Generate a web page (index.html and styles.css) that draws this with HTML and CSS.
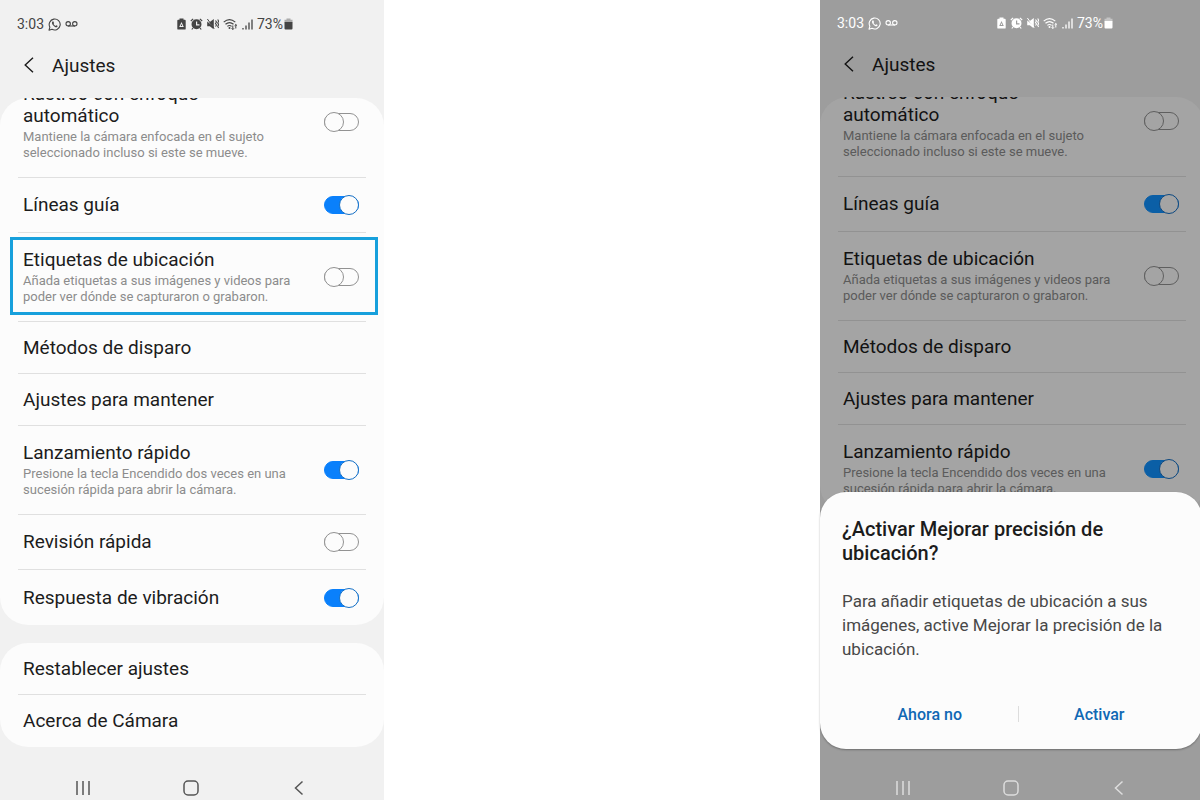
FILE: index.html
```html
<!DOCTYPE html>
<html lang="es">
<head>
  <meta charset="UTF-8" />
  <title>Ajustes</title>
  <link rel="stylesheet" href="styles.css">
</head>
<body>

  <!-- Icons shared by both screens -->
  <svg class="sprite" aria-hidden="true">
    <symbol id="chat" viewBox="0 0 13 13">
      <path d="M1 12.2l.9-3A5.5 5.5 0 1 1 4 11.3z" fill="none" stroke="currentColor" stroke-width="1.1" stroke-linejoin="round"/>
      <path d="M4.6 3.4c-1 .8-.8 2.2.5 3.8 1.4 1.7 3 2.6 4.1 1.7.4-.4.5-.9.2-1.1l-1.2-.6-.8.7c-.9-.4-1.5-1.1-1.9-1.9l.6-.8-.6-1.4c-.2-.5-.6-.6-.9-.4z" fill="currentColor"/>
    </symbol>
    <symbol id="voicemail" viewBox="0 0 13 8">
      <path d="M3 6h7" fill="none" stroke="currentColor" stroke-width="1.1"/>
      <circle cx="3.2" cy="3.8" r="2.2" fill="none" stroke="currentColor" stroke-width="1.1"/>
      <circle cx="9.8" cy="3.8" r="2.2" fill="none" stroke="currentColor" stroke-width="1.1"/>
    </symbol>
    <symbol id="saver" viewBox="0 0 9 12">
      <path fill-rule="evenodd" d="M2.5.5h4v1.3h1.300q.9 0 .9.9v8q0 .9-.9.9H1.200q-.9 0-.9-.9v-8q0-.9.9-.9h1.300zM4.500 4L2.200 8.900h4.600zM4.500 6l.8 1.900H3.700z" fill="currentColor"/>
    </symbol>
    <symbol id="alarm" viewBox="0 0 13 12">
      <path d="M.8 3L3.2.9M12.2 3L9.8.9M3 10l-1.2 1.5M10 10l1.2 1.5" stroke="currentColor" stroke-width="1.2" fill="none"/>
      <path fill-rule="evenodd" d="M6.5 1.2a5 5 0 1 0 0 10 5 5 0 0 0 0-10zM6 3.5h1.200v2.700h2.300v1.200H6z" fill="currentColor"/>
    </symbol>
    <symbol id="mute" viewBox="0 0 12 12">
      <path d="M.2 3.500L6.500 11V8.500zM2.500 4.200L6.800 9V1zM.2 3.500v4.800h2.600L6.600 11.200V9z" fill="currentColor"/>
      <path d="M.4 1l6.800 9.500" stroke="currentColor" stroke-width="1"/>
      <path d="M8.5 2.5l1 1.500-1 1.500 1 1.500-1 1.500M10.700 1.500l1 1.700-1 1.700 1 1.700-1 1.700 1 1.700" fill="none" stroke="currentColor" stroke-width="1.100"/>
    </symbol>
    <symbol id="wifi" viewBox="0 0 15 12">
      <path d="M.7 4.1q5.800-5 11.600 0M2.500 6.300q4-3.500 8 0M4.400 8.400q2.100-1.800 4.200 0" fill="none" stroke="currentColor" stroke-width="1.200"/>
      <circle cx="6.5" cy="10" r="1" fill="currentColor"/>
      <path d="M9.800 7.500v4M8.600 10.300l1.200 1.200 1.200-1.200M12.800 10.500v-4M11.600 7.700l1.200-1.200L14 7.700" fill="none" stroke="currentColor" stroke-width="1"/>
    </symbol>
    <symbol id="signal" viewBox="0 0 11 12">
      <path d="M1 10v1.500M4 7.500v4M7 4.500v7M10 1.500v10" stroke="currentColor" stroke-width="1.300"/>
    </symbol>
    <symbol id="battery" viewBox="0 0 9 12">
      <path d="M2.500.5h4v1.300h2v2.400h-8V1.800h2z" fill="currentColor" opacity=".4"/>
      <path d="M.5 4h8v6.500q0 1-1 1h-6q-1 0-1-1z" fill="currentColor"/>
    </symbol>
    <symbol id="chevron" viewBox="0 0 10 16">
      <path d="M9 .8L1.200 8 9 15.200" fill="none" stroke="currentColor" stroke-width="1.400"/>
    </symbol>
    <symbol id="recents" viewBox="0 0 16 16">
      <path d="M2 1v14M8 1v14M14 1v14" stroke="currentColor" stroke-width="1.500"/>
    </symbol>
    <symbol id="home" viewBox="0 0 16 16">
      <rect x="1" y="1" width="14" height="14" rx="4" fill="none" stroke="currentColor" stroke-width="1.500"/>
    </symbol>
    <symbol id="back" viewBox="0 0 16 16">
      <path d="M11.500 1.500L4.500 8l7 6.500" fill="none" stroke="currentColor" stroke-width="1.500"/>
    </symbol>
  </svg>

  <!-- Camera settings -->
  <main class="phone">
    <div class="status-bar">
      <div class="status-left">
        <span>3:03</span>
        <svg width="13" height="13"><use href="#chat"/></svg>
        <svg width="13" height="8"><use href="#voicemail"/></svg>
      </div>
      <div class="status-right">
        <svg width="9" height="12"><use href="#saver"/></svg>
        <svg width="13" height="12"><use href="#alarm"/></svg>
        <svg width="12" height="12"><use href="#mute"/></svg>
        <svg width="15" height="12"><use href="#wifi"/></svg>
        <svg width="11" height="12"><use href="#signal"/></svg>
        <span class="charge">73%<svg width="9" height="12"><use href="#battery"/></svg></span>
      </div>
    </div>
    <header class="title-bar">
      <button class="icon-button" aria-label="Atrás"><svg width="10" height="16"><use href="#chevron"/></svg></button>
      <h1>Ajustes</h1>
    </header>

    <div class="card scrolled">
      <label class="row detail">
        <span class="text"><span class="name">Rastreo con enfoque<br>automático</span><span class="hint">Mantiene la cámara enfocada en el sujeto seleccionado incluso si este se mueve.</span></span>
        <input class="switch" type="checkbox">
      </label>
      <label class="row toggle">
        <span class="name">Líneas guía</span>
        <input class="switch" type="checkbox" checked>
      </label>
      <label class="row detail highlight">
        <span class="text"><span class="name">Etiquetas de ubicación</span><span class="hint">Añada etiquetas a sus imágenes y videos para poder ver dónde se capturaron o grabaron.</span></span>
        <input class="switch" type="checkbox">
      </label>
      <a class="row" href="#"><span class="name">Métodos de disparo</span></a>
      <a class="row" href="#"><span class="name">Ajustes para mantener</span></a>
      <label class="row detail">
        <span class="text"><span class="name">Lanzamiento rápido</span><span class="hint">Presione la tecla Encendido dos veces en una sucesión rápida para abrir la cámara.</span></span>
        <input class="switch" type="checkbox" checked>
      </label>
      <label class="row toggle">
        <span class="name">Revisión rápida</span>
        <input class="switch" type="checkbox">
      </label>
      <label class="row toggle">
        <span class="name">Respuesta de vibración</span>
        <input class="switch" type="checkbox" checked>
      </label>
    </div>

    <div class="card">
      <a class="row" href="#"><span class="name">Restablecer ajustes</span></a>
      <a class="row" href="#"><span class="name">Acerca de Cámara</span></a>
    </div>

    <nav class="nav-bar">
      <button class="icon-button" aria-label="Recientes"><svg width="16" height="16"><use href="#recents"/></svg></button>
      <button class="icon-button" aria-label="Inicio"><svg width="16" height="16"><use href="#home"/></svg></button>
      <button class="icon-button" aria-label="Volver"><svg width="16" height="16"><use href="#back"/></svg></button>
    </nav>
  </main>

  <!-- Same screen with the location dialog open -->
  <section class="phone dimmed">
    <div class="status-bar">
      <div class="status-left">
        <span>3:03</span>
        <svg width="13" height="13"><use href="#chat"/></svg>
        <svg width="13" height="8"><use href="#voicemail"/></svg>
      </div>
      <div class="status-right">
        <svg width="9" height="12"><use href="#saver"/></svg>
        <svg width="13" height="12"><use href="#alarm"/></svg>
        <svg width="12" height="12"><use href="#mute"/></svg>
        <svg width="15" height="12"><use href="#wifi"/></svg>
        <svg width="11" height="12"><use href="#signal"/></svg>
        <span class="charge">73%<svg width="9" height="12"><use href="#battery"/></svg></span>
      </div>
    </div>
    <header class="title-bar">
      <button class="icon-button" aria-label="Atrás"><svg width="10" height="16"><use href="#chevron"/></svg></button>
      <h2>Ajustes</h2>
    </header>

    <div class="card scrolled">
      <label class="row detail">
        <span class="text"><span class="name">Rastreo con enfoque<br>automático</span><span class="hint">Mantiene la cámara enfocada en el sujeto seleccionado incluso si este se mueve.</span></span>
        <input class="switch" type="checkbox">
      </label>
      <label class="row toggle">
        <span class="name">Líneas guía</span>
        <input class="switch" type="checkbox" checked>
      </label>
      <label class="row detail">
        <span class="text"><span class="name">Etiquetas de ubicación</span><span class="hint">Añada etiquetas a sus imágenes y videos para poder ver dónde se capturaron o grabaron.</span></span>
        <input class="switch" type="checkbox">
      </label>
      <a class="row" href="#"><span class="name">Métodos de disparo</span></a>
      <a class="row" href="#"><span class="name">Ajustes para mantener</span></a>
      <label class="row detail">
        <span class="text"><span class="name">Lanzamiento rápido</span><span class="hint">Presione la tecla Encendido dos veces en una sucesión rápida para abrir la cámara.</span></span>
        <input class="switch" type="checkbox" checked>
      </label>
    </div>

    <nav class="nav-bar">
      <button class="icon-button" aria-label="Recientes"><svg width="16" height="16"><use href="#recents"/></svg></button>
      <button class="icon-button" aria-label="Inicio"><svg width="16" height="16"><use href="#home"/></svg></button>
      <button class="icon-button" aria-label="Volver"><svg width="16" height="16"><use href="#back"/></svg></button>
    </nav>

    <div class="scrim"></div>
    <div class="dialog" role="dialog" aria-labelledby="dialog-title">
      <h3 id="dialog-title">¿Activar Mejorar precisión de ubicación?</h3>
      <p>Para añadir etiquetas de ubicación a sus imágenes, active Mejorar la precisión de la ubicación.</p>
      <div class="actions">
        <button>Ahora no</button>
        <span class="separator"></span>
        <button>Activar</button>
      </div>
    </div>
  </section>

</body>
</html>
```
FILE: styles.css
```css
*, *::before, *::after {
  box-sizing: border-box;
}
body {
  margin: 0;
  display: flex;
  justify-content: space-between;
  height: 100vh;
  overflow: hidden;
  background: #fff;
  color: #1c1c1c;
  font-family: Roboto, sans-serif;
}
.sprite {
  position: absolute;
  width: 0;
  height: 0;
}
svg {
  display: block;
  flex: none;
}
button {
  padding: 0;
  border: none;
  background: none;
  color: inherit;
  font-family: inherit;
  cursor: pointer;
}
h1, h2, h3, p {
  margin: 0;
}

/* Screen */
.phone {
  position: relative;
  display: flex;
  flex-direction: column;
  flex: 0 0 32%;
  min-height: 100vh;
  background: #f1f1f1;
}
.status-bar {
  display: flex;
  justify-content: space-between;
  align-items: center;
  height: 48px;
  padding: 0 91px 0 17px;
  color: #444;
  font-size: 14px;
}
.status-left, .status-right, .charge {
  display: flex;
  align-items: center;
}
.status-left, .status-right {
  gap: 4px;
}
.charge {
  gap: 1px;
}
.title-bar {
  display: flex;
  align-items: center;
  gap: 18px;
  height: 34px;
  margin-bottom: 16px;
  padding-left: 24px;
}
.title-bar h1, .title-bar h2 {
  font-size: 19px;
  font-weight: 400;
}

/* Setting rows */
.card {
  margin-bottom: 18px;
  overflow: hidden;
  border-radius: 28px;
  background: #fcfcfc;
}
.row {
  position: relative;
  display: flex;
  justify-content: space-between;
  align-items: center;
  min-height: 52px;
  margin: 0 18px;
  padding: 0 7px 0 5px;
  border-bottom: 1px solid #e0e0e0;
  color: inherit;
  text-decoration: none;
}
.row:last-child {
  border-bottom: none;
}
.toggle {
  min-height: 55px;
}
.detail {
  padding-top: 16px;
  padding-bottom: 16px;
}
.scrolled .row:first-child {
  margin-top: -31px;
}
.name {
  display: block;
  font-size: 19px;
  line-height: 22px;
}
.hint {
  display: block;
  margin-top: 2px;
  color: #8c8c8c;
  font-size: 13px;
  line-height: 16px;
}
.text {
  max-width: 280px;
}
.highlight::after {
  content: "";
  position: absolute;
  inset: 4px -12px 6px -8px;
  border: 3px solid #17a0dc;
}

/* Track and knob share one grid cell */
.switch {
  appearance: none;
  display: grid;
  align-items: center;
  flex: none;
  width: 35px;
  height: 20px;
  margin: 0;
}
.switch::before, .switch::after {
  content: "";
  grid-area: 1 / 1;
  border: 1px solid #929292;
  border-radius: 10px;
}
.switch::before {
  height: 18px;
}
.switch::after {
  width: 20px;
  height: 20px;
  background: #fcfcfc;
}
.switch:checked::before {
  border-color: #0a80fb;
  background: #0a80fb;
}
.switch:checked::after {
  justify-self: end;
  border-color: #1770c4;
}

.nav-bar {
  display: grid;
  grid-template-columns: repeat(3, 1fr);
  height: 24px;
  margin-top: auto;
  padding: 0 31px 0 29px;
  color: #555;
}
.icon-button {
  display: flex;
  justify-content: center;
  align-items: center;
}

/* Dialog screen */
.dimmed {
  margin: -1px -4px 0 0;
  min-height: calc(100vh + 1px);
}
.dimmed .status-bar, .dimmed .nav-bar {
  position: relative;
  z-index: 1;
  color: #fff;
}
.dimmed .nav-bar {
  color: #ddd;
}
.dimmed .switch:checked::before {
  border-color: #1192ff;
  background: #1192ff;
}
.scrim {
  position: absolute;
  inset: 0;
  background: rgba(0, 0, 0, 0.35);
}
.dialog {
  position: absolute;
  left: 0;
  right: 2px;
  bottom: 51px;
  padding: 25px 22px 17px;
  border-radius: 26px;
  background: #fcfcfc;
  box-shadow: 0 1px 2px rgba(0, 0, 0, 0.3);
}
.dialog h3 {
  font-size: 20px;
  font-weight: 500;
  line-height: 24px;
}
.dialog p {
  margin: 24px 0 35px;
  color: #484848;
  font-size: 17px;
  line-height: 24px;
}
.actions {
  display: flex;
  align-items: center;
}
.actions button {
  flex: 1 1 auto;
  height: 36px;
  color: #1068b4;
  font-size: 16px;
  font-weight: 500;
}
.separator {
  width: 1px;
  height: 16px;
  background: #ddd;
}
```
